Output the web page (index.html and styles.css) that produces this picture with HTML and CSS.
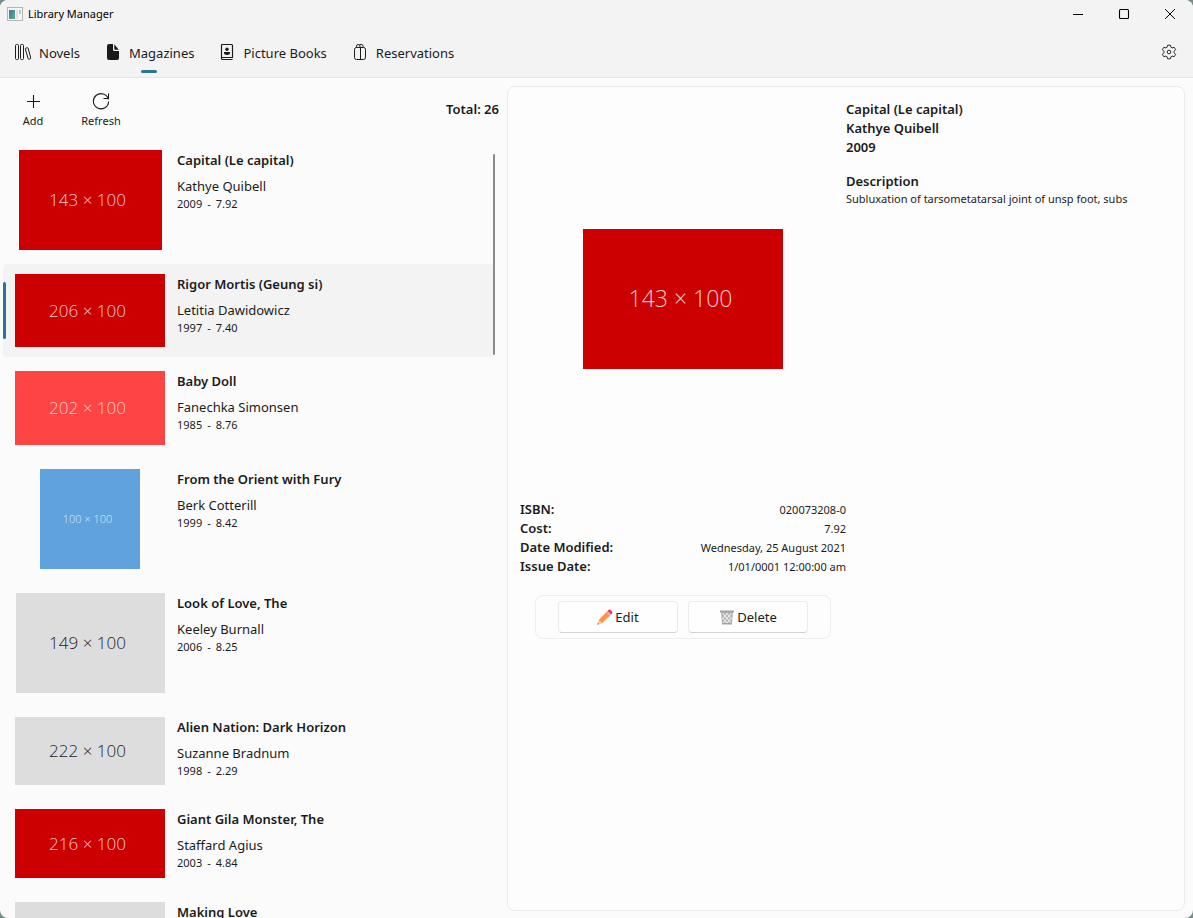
FILE: index.html
```html
<!DOCTYPE html>
<html lang="en">
<head>
<meta charset="utf-8">
<meta name="viewport" content="width=device-width, initial-scale=1">
<title>Library Manager</title>
<link rel="stylesheet" href="styles.css">
</head>
<body>
<div class="window">
  <header class="titlebar">
    <svg class="app-icon" width="16" height="14" viewBox="0 0 16 14" aria-hidden="true">
      <defs>
        <linearGradient id="pane" x1="0" y1="0" x2="1" y2="1"><stop offset="0" stop-color="#3f74a8"/><stop offset="1" stop-color="#58b389"/></linearGradient>
      </defs>
      <rect x=".5" y=".5" width="15" height="13" fill="#f6f6f6" stroke="#b5b5b5"/>
      <rect x="2" y="3" width="6" height="9" fill="url(#pane)"/>
      <rect x="9" y="3" width="2" height="9" fill="#dfe3e6"/>
      <rect x="12" y="3" width="2" height="4" fill="#a9cfc8"/>
    </svg>
    <h1 class="app-name">Library Manager</h1>
    <div class="window-controls">
      <button class="window-button" type="button" aria-label="Minimize"><svg width="12" height="12" viewBox="0 0 12 12"><path d="M1 6.500h10" stroke="#000" fill="none"/></svg></button>
      <button class="window-button" type="button" aria-label="Maximize"><svg width="12" height="12" viewBox="0 0 12 12"><rect x="1.500" y="1.500" width="9" height="9" rx="1" stroke="#000" fill="none" stroke-width="1.100"/></svg></button>
      <button class="window-button" type="button" aria-label="Close"><svg width="12" height="12" viewBox="0 0 12 12"><path d="M1 1l10 10M11 1L1 11" stroke="#000" fill="none"/></svg></button>
    </div>
  </header>

  <nav class="nav">
    <button class="tab" type="button">
      <svg class="tab-icon" width="18" height="18" viewBox="0 0 18 18" fill="none" stroke="#1b1b1b" aria-hidden="true"><rect x="1.500" y="1.500" width="3" height="15" rx="1"/><rect x="6.500" y="1.500" width="3" height="15" rx="1"/><path d="M11.900 5.100l1.300-.35q.8-.2 1 .6l2.500 9.500q.2.8-.6 1l-1 .3q-.8.2-1-.6l-2.700-9.400q-.2-.8.500-1.050z"/></svg>
      <span class="tab-label">Novels</span>
    </button>
    <button class="tab tab-current" type="button" aria-current="page">
      <svg class="tab-icon" width="18" height="18" viewBox="0 0 18 18" fill="#1b1b1b" aria-hidden="true"><path d="M5 1h4v5.500q0 1.500 1.500 1.500H15v7q0 2-2 2H5q-2 0-2-2V3q0-2 2-2zM10.300 1.200L14.800 6.700H11.200q-.9 0-.9-.9z"/></svg>
      <span class="tab-label">Magazines</span>
    </button>
    <button class="tab" type="button">
      <svg class="tab-icon" width="18" height="18" viewBox="0 0 18 18" fill="none" stroke="#1b1b1b" aria-hidden="true"><path d="M14.500 14.500h-11v-12q0-1 1-1h9q1 0 1 1zM3.500 14v1.500q0 1 1 1h10" stroke-width="1.200"/><circle cx="9" cy="6.200" r="1.700" fill="#1b1b1b" stroke="none"/><path d="M6 9h6v.8q0 2.200-3 2.200t-3-2.200z" fill="#1b1b1b" stroke="none"/></svg>
      <span class="tab-label">Picture Books</span>
    </button>
    <button class="tab" type="button">
      <svg class="tab-icon" width="18" height="18" viewBox="0 0 18 18" fill="none" stroke="#1b1b1b" aria-hidden="true"><rect x="3.500" y="4.500" width="11" height="12" rx="2"/><path d="M9.500 4.500v12M5.500 4.500V3.200q0-1.700 1.700-1.700T9 3.200v1.300M8.500 1.500h1.700q2 0 2 2v1"/></svg>
      <span class="tab-label">Reservations</span>
    </button>
    <button class="settings" type="button" aria-label="Settings">
      <svg width="16" height="16" viewBox="0 0 16 16" fill="none" stroke="#2a2a2a" stroke-linejoin="round" aria-hidden="true"><path d="M6.600 1.200h2.800l.5 2 1.300.7 2-.6 1.400 2.400-1.500 1.500v1.600l1.500 1.500-1.400 2.400-2-.6-1.300.7-.5 2H6.600l-.5-2-1.300-.7-2 .6-1.400-2.400 1.500-1.500V7.200L1.400 5.700l1.400-2.400 2 .6 1.300-.7z"/><circle cx="8" cy="8" r="1.800"/></svg>
    </button>
  </nav>

  <div class="content">
    <section class="library" aria-label="Magazines">
      <div class="toolbar">
        <button class="tool" type="button">
          <svg width="18" height="18" viewBox="0 0 18 18" fill="none" stroke="#1b1b1b" aria-hidden="true"><path d="M9.500 3v13M3 9.500h13" stroke-width="1.100"/></svg>
          <span>Add</span>
        </button>
        <button class="tool" type="button">
          <svg width="18" height="18" viewBox="0 0 18 18" fill="none" stroke="#1b1b1b" aria-hidden="true"><path d="M16.400 7.500A7.600 7.600 0 1 0 16.600 9.500M16.500 1.500v5h-5" stroke-width="1.100"/></svg>
          <span>Refresh</span>
        </button>
        <p class="total">Total: 26</p>
      </div>
      <div class="list-area">
        <ul class="list">
          <li class="item"><div class="cover-slot"><div class="cover cover-red cover-143">143 × 100</div></div><div class="info"><h2 class="name">Capital (Le capital)</h2><p class="author">Kathye Quibell</p><p class="meta"><span>2009</span><span>-</span><span>7.92</span></p></div></li>
          <li class="item item-selected"><div class="cover-slot"><div class="cover cover-red cover-206">206 × 100</div></div><div class="info"><h2 class="name">Rigor Mortis (Geung si)</h2><p class="author">Letitia Dawidowicz</p><p class="meta"><span>1997</span><span>-</span><span>7.40</span></p></div></li>
          <li class="item"><div class="cover-slot"><div class="cover cover-coral cover-202">202 × 100</div></div><div class="info"><h2 class="name">Baby Doll</h2><p class="author">Fanechka Simonsen</p><p class="meta"><span>1985</span><span>-</span><span>8.76</span></p></div></li>
          <li class="item"><div class="cover-slot"><div class="cover cover-blue cover-100">100 × 100</div></div><div class="info"><h2 class="name">From the Orient with Fury</h2><p class="author">Berk Cotterill</p><p class="meta"><span>1999</span><span>-</span><span>8.42</span></p></div></li>
          <li class="item"><div class="cover-slot"><div class="cover cover-grey cover-149">149 × 100</div></div><div class="info"><h2 class="name">Look of Love, The</h2><p class="author">Keeley Burnall</p><p class="meta"><span>2006</span><span>-</span><span>8.25</span></p></div></li>
          <li class="item"><div class="cover-slot"><div class="cover cover-grey cover-222">222 × 100</div></div><div class="info"><h2 class="name">Alien Nation: Dark Horizon</h2><p class="author">Suzanne Bradnum</p><p class="meta"><span>1998</span><span>-</span><span>2.29</span></p></div></li>
          <li class="item"><div class="cover-slot"><div class="cover cover-red cover-216">216 × 100</div></div><div class="info"><h2 class="name">Giant Gila Monster, The</h2><p class="author">Staffard Agius</p><p class="meta"><span>2003</span><span>-</span><span>4.84</span></p></div></li>
          <li class="item"><div class="cover-slot"><div class="cover cover-grey cover-222"></div></div><div class="info"><h2 class="name">Making Love</h2></div></li>
        </ul>
        <div class="scroll-thumb"></div>
      </div>
    </section>

    <main class="details">
      <div class="details-main">
        <div class="preview"><div class="cover cover-red cover-large">143 × 100</div></div>
        <dl class="facts">
          <div class="fact"><dt>ISBN:</dt><dd>020073208-0</dd></div>
          <div class="fact"><dt>Cost:</dt><dd>7.92</dd></div>
          <div class="fact"><dt>Date Modified:</dt><dd>Wednesday, 25 August 2021</dd></div>
          <div class="fact"><dt>Issue Date:</dt><dd>1/01/0001 12:00:00 am</dd></div>
        </dl>
        <div class="actions">
          <button class="action" type="button">
            <svg width="16" height="16" viewBox="0 0 16 16" aria-hidden="true"><path d="M10.500 2l3.500 3.500L5 14.300 1.700 11z" fill="#ff9148"/><path d="M1.700 11L5 14.300 1 15.500q-.6 0-.5-.6z" fill="#fdc68c"/><path d="M.8 14l1.200 1.200-1 .3q-.6 0-.5-.6z" fill="#555"/><path d="M9.500 3l3.500 3.500 1-1L10.500 2z" fill="#c9c6d2"/><path d="M10.500 2l1-1q1-.8 2 0l1.500 1.500q.8 1 0 2l-1 1z" fill="#f92f60"/></svg>
            <span>Edit</span>
          </button>
          <button class="action" type="button">
            <svg width="16" height="16" viewBox="0 0 16 16" aria-hidden="true"><path d="M2 2.500h12L13 15H3z" fill="#b4b4b4"/><path d="M3.500 4l8.500 10M7.500 4l5 6M3.500 9l4.500 5M12.500 4L4 14M8.500 4l-5 6M12.500 9L8 14" stroke="#f2f2f2" fill="none"/><path d="M1 1.500h14v2H1z" fill="#a3a3a3"/><path d="M3 14h10v1.500H3z" fill="#a3a3a3"/></svg>
            <span>Delete</span>
          </button>
        </div>
      </div>
      <div class="details-side">
        <h2 class="line">Capital (Le capital)</h2>
        <p class="line">Kathye Quibell</p>
        <p class="line">2009</p>
        <h3 class="line line-description">Description</h3>
        <p class="description">Subluxation of tarsometatarsal joint of unsp foot, subs</p>
      </div>
    </main>
  </div>
</div>
</body>
</html>
```
FILE: styles.css
```css
* {
  box-sizing: border-box;
}

body,
h1,
h2,
h3,
p,
ul,
dl,
dd {
  margin: 0;
  padding: 0;
}

body {
  background: #6f9188;
  color: #1b1b1b;
  font-family: "Noto Sans", "Open Sans", sans-serif;
  font-size: 13px;
  line-height: 19px;
}

button {
  padding: 0;
  border: 0;
  background: transparent;
  color: inherit;
  font: inherit;
}

svg {
  flex: none;
}

.window {
  display: flex;
  flex-direction: column;
  height: 100vh;
  overflow: hidden;
  border-radius: 8px;
  background: #fbfbfb;
}

.titlebar {
  display: flex;
  flex: none;
  align-items: center;
  height: 27px;
  padding-left: 7px;
  background: #f3f3f3;
}

.app-name {
  margin-left: 5px;
  color: #000;
  font-size: 11px;
  font-weight: 400;
}

.window-controls {
  display: flex;
  height: 26px;
  margin-left: auto;
}

.window-button {
  display: flex;
  align-items: center;
  justify-content: center;
  width: 46px;
}

.nav {
  display: flex;
  flex: none;
  gap: 24px;
  height: 51px;
  padding: 0 16px 0 14px;
  border-bottom: 1px solid #e6e6e6;
  background: #f3f3f3;
}

.tab {
  position: relative;
  display: flex;
  align-items: center;
  gap: 7px;
}

.tab-label {
  padding-top: 3px;
}

.tab-current::after {
  content: "";
  position: absolute;
  bottom: 4px;
  left: 50%;
  width: 16px;
  height: 3px;
  margin-left: -8px;
  border-radius: 2px;
  background: #2d7492;
}

.settings {
  display: flex;
  align-items: center;
  margin-left: auto;
}

.content {
  display: grid;
  flex: 1;
  grid-template-columns: minmax(0, 499px) minmax(0, 1fr);
  gap: 8px;
  min-height: 0;
  padding-right: 8px;
}

.library {
  display: flex;
  flex-direction: column;
  min-height: 0;
}

.toolbar {
  display: flex;
  flex: none;
  align-items: center;
  height: 62px;
}

.tool {
  display: flex;
  flex-direction: column;
  align-items: center;
  gap: 2px;
  width: 66px;
  padding-top: 4px;
  font-size: 11px;
  line-height: 18px;
}

.tool + .tool {
  width: 70px;
}

.total {
  margin-left: auto;
  font-weight: 600;
}

.list-area {
  position: relative;
  flex: 1;
  min-height: 0;
  margin-right: 4px;
  overflow: hidden;
}

.list {
  display: flex;
  flex-direction: column;
  gap: 4px;
  list-style: none;
}

.item {
  display: flex;
  flex: none;
  gap: 12px;
  margin: 0 1px 0 3px;
  padding: 10px 12px;
  border-radius: 4px;
}

.item-selected {
  position: relative;
  background: #f3f3f3;
}

.item-selected::before {
  content: "";
  position: absolute;
  top: 18px;
  bottom: 18px;
  left: 0;
  width: 3px;
  border-radius: 2px;
  background: #2d7492;
}

.info {
  padding-top: 1px;
}

.cover-slot {
  display: flex;
  flex: none;
  justify-content: center;
  width: 150px;
}

.cover {
  display: flex;
  align-items: center;
  justify-content: center;
  width: 150px;
  padding: 0 5px 1px 0;
  font-family: "Open Sans", "Noto Sans", sans-serif;
  font-size: 17px;
  font-weight: 300;
}

.cover-red {
  background: #c00;
  color: #f5cccc;
}

.cover-coral {
  background: #f44;
  color: #fcc;
}

.cover-blue {
  background: #5fa2dd;
  color: #dfecf8;
}

.cover-grey {
  background: #ddd;
  color: #222;
}

.cover-143 {
  width: 143px;
  height: 100px;
}

.cover-206 {
  height: 73px;
}

.cover-202 {
  height: 74px;
}

.cover-100 {
  width: 100px;
  height: 100px;
  font-size: 11px;
}

.cover-149 {
  width: 149px;
  height: 100px;
}

.cover-222 {
  height: 68px;
}

.cover-216 {
  height: 69px;
}

.cover-large {
  width: 200px;
  height: 140px;
  font-size: 23px;
}

.name {
  margin-bottom: 7px;
  font-size: 13px;
  font-weight: 600;
}

.meta {
  display: flex;
  gap: 5px;
  font-size: 11px;
  line-height: 16px;
}

.scroll-thumb {
  position: absolute;
  top: 14px;
  right: 0;
  width: 2px;
  height: 201px;
  border-radius: 1px;
  background: #8a8a8a;
}

.details {
  display: grid;
  grid-template-columns: repeat(2, minmax(0, 1fr));
  align-items: start;
  margin: 8px 0 7px;
  padding: 13px 12px;
  border: 1px solid #ebebeb;
  border-radius: 8px;
  background: #fdfdfd;
}

.preview {
  display: flex;
  align-items: center;
  justify-content: center;
  height: 400px;
  padding-bottom: 2px;
}

.fact {
  display: flex;
  justify-content: space-between;
}

.fact dt,
.line {
  font-size: 13px;
  font-weight: 600;
}

.fact dd {
  font-size: 11px;
}

.actions {
  display: flex;
  justify-content: center;
  gap: 10px;
  margin: 19px 15px 0;
  padding: 5px;
  border: 1px solid #efefef;
  border-radius: 8px;
}

.action {
  display: flex;
  align-items: center;
  justify-content: center;
  gap: 2px;
  width: 120px;
  height: 32px;
  border: 1px solid #ececec;
  border-bottom-color: #d2d2d2;
  border-radius: 4px;
  background: #fefefe;
}

.line-description {
  margin-top: 15px;
}

.description {
  overflow: hidden;
  font-size: 11px;
  line-height: 16px;
  white-space: nowrap;
}
```
